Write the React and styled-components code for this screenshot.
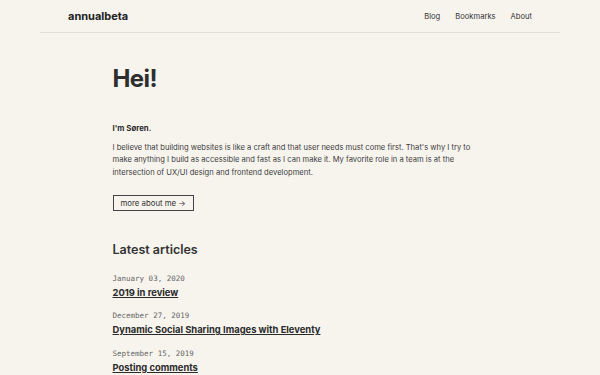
import React from "react";
import styled, { createGlobalStyle } from "styled-components";

const GlobalStyle = createGlobalStyle`
  html, body {
    margin: 0;
    padding: 0;
    background: #f7f4ee;
    color: #2b2b2b;
    font-family: Inter, "Liberation Sans", sans-serif;
  }
`;

const Header = styled.header`
  margin: 0 40px;
  height: 33px;
  border-bottom: 1px solid #e2ded6;
  display: flex;
  align-items: center;
  justify-content: space-between;
  padding: 0 28px;
  box-sizing: border-box;
`;

const Logo = styled.a`
  font-size: 11px;
  font-weight: 700;
  color: #222;
  text-decoration: none;
`;

const Nav = styled.nav`
  display: flex;
  gap: 15px;

  & a {
    font-size: 7.6px;
    color: #333;
    text-decoration: none;
  }
`;

const Main = styled.main`
  width: 375px;
  margin: 0 auto;
  padding-top: 31px;
`;

const Title = styled.h1`
  margin: 0;
  font-size: 24px;
  font-weight: 700;
  line-height: 30px;
  letter-spacing: -0.6px;
  color: #2e2e2e;
`;

const Intro = styled.p`
  margin: 29px 0 0;
  font-size: 7.8px;
  line-height: 10px;
  font-weight: 700;
`;

const Text = styled.p`
  margin: 8.5px 0 0;
  font-size: 7.6px;
  line-height: 12.7px;
  color: #3d3d3d;
`;

const MoreButton = styled.a`
  display: block;
  width: fit-content;
  margin-top: 15px;
  border: 1px solid #444;
  padding: 1px 7px;
  font-size: 7.8px;
  line-height: 12px;
  color: #333;
  text-decoration: none;
`;

const SectionTitle = styled.h2`
  margin: 31px 0 0;
  font-size: 12.5px;
  line-height: 16px;
  font-weight: 600;
  color: #333;
`;

const ArticleList = styled.ul`
  list-style: none;
  margin: 16px 0 0;
  padding: 0;
  display: flex;
  flex-direction: column;
  gap: 12.5px;
`;

const Article = styled.li`
  display: flex;
  flex-direction: column;
  gap: 3px;
`;

const Date = styled.time`
  font-family: "DejaVu Sans Mono", "Liberation Mono", monospace;
  font-size: 7.5px;
  line-height: 10px;
  color: #666;
`;

const ArticleLink = styled.a`
  font-size: 9.4px;
  line-height: 12px;
  font-weight: 700;
  color: #2b2b2b;
  text-decoration: underline;
`;

const articles = [
  { date: "January 03, 2020", title: "2019 in review" },
  { date: "December 27, 2019", title: "Dynamic Social Sharing Images with Eleventy" },
  { date: "September 15, 2019", title: "Posting comments" },
];

export default function App() {
  return (
    <>
      <GlobalStyle />
      <Header>
        <Logo href="#">annualbeta</Logo>
        <Nav>
          <a href="#">Blog</a>
          <a href="#">Bookmarks</a>
          <a href="#">About</a>
        </Nav>
      </Header>
      <Main>
        <Title>Hei!</Title>
        <Intro>I'm Søren.</Intro>
        <Text>
          I believe that building websites is like a craft and that user needs must come first. That's why I try to
          make anything I build as accessible and fast as I can make it. My favorite role in a team is at the
          intersection of UX/UI design and frontend development.
        </Text>
        <MoreButton href="#">more about me →</MoreButton>
        <SectionTitle>Latest articles</SectionTitle>
        <ArticleList>
          {articles.map((a) => (
            <Article key={a.title}>
              <Date>{a.date}</Date>
              <ArticleLink href="#">{a.title}</ArticleLink>
            </Article>
          ))}
        </ArticleList>
      </Main>
    </>
  );
}
